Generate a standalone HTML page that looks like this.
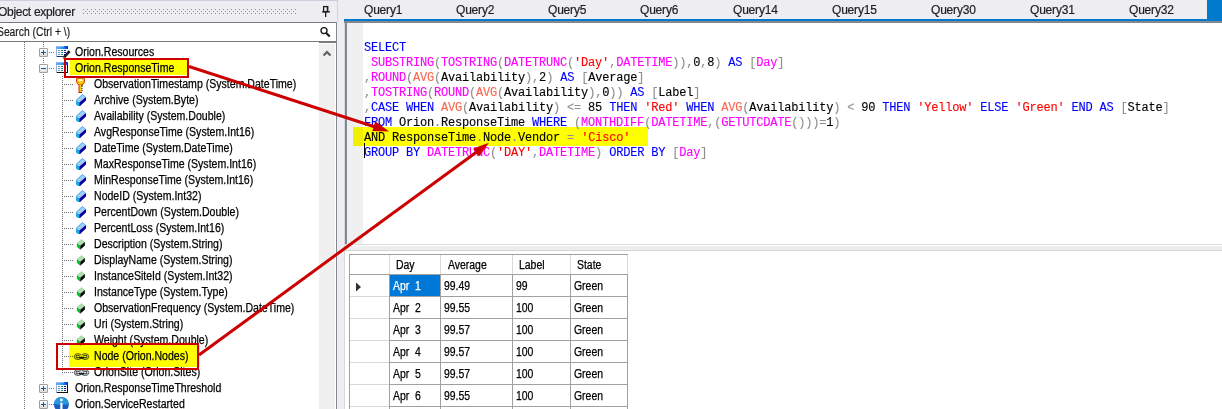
<!DOCTYPE html>
<html><head><meta charset="utf-8">
<style>
*{margin:0;padding:0;box-sizing:border-box}
html,body{width:1222px;height:409px;overflow:hidden;background:#fff;position:relative;font-family:"Liberation Sans",sans-serif}
.a{position:absolute}
.hdr{left:0;top:0;width:337px;height:22px;background:#EEEEF2;border-top:1px solid #CCCEDB}
.hdrtxt{left:-2px;top:5px;font-size:12px;color:#1E1E1E;letter-spacing:-0.3px;white-space:nowrap;-webkit-text-stroke:0.2px #1E1E1E}
.grip{left:83px;top:9px;width:214px;height:5px;background-image:linear-gradient(#8A8A8A,#8A8A8A),linear-gradient(#8A8A8A,#8A8A8A);background-size:1px 1px;background-repeat:no-repeat}
.search{left:-2px;top:22px;width:339px;height:21px;background:#fff;border:1px solid #7A7A7A;border-width:1px 1px 2px 0}
.stxt{left:-3px;top:25px;font-size:12px;color:#1E1E1E;white-space:nowrap;transform:scaleX(0.86);transform-origin:0 0;-webkit-text-stroke:0.2px #1E1E1E}
.tree{left:0;top:42px;width:319px;height:367px;background:#fff;overflow:hidden}
.sb{left:319px;top:44px;width:16px;height:365px;background:#F0F0F0}
.vborder{left:336px;top:22px;width:1px;height:387px;background:#828790}
.split{left:337px;top:0;width:7px;height:409px;background:#EEEEF2}
.tabs{left:344px;top:0;width:878px;height:19px;background:#EEEEF2}
.tab{top:3px;font-size:12px;letter-spacing:-0.2px;color:#1E1E1E;white-space:nowrap;-webkit-text-stroke:0.2px #1E1E1E}
.bluel{left:344px;top:19px;width:878px;height:2px;background:#007ACC}
.edframe{left:344px;top:21px;width:878px;height:2px;background:#828790}
.edl{left:345px;top:21px;width:2px;height:223px;background:#828790}
.margin{left:347px;top:23px;width:16px;height:221px;background:#F0F0F0}
.code{left:364px;top:41px;font-family:"Liberation Mono",monospace;font-size:12px;letter-spacing:-0.2px;line-height:15px;white-space:pre;color:#000;-webkit-text-stroke:0.12px currentColor}
.k{color:#0000FF}.f{color:#FF00FF}.g{color:#909090}.s{color:#FF0000}.ag{color:#F86850}
.tr{font-size:12px;white-space:nowrap;color:#000;-webkit-text-stroke:0.25px #000;line-height:16px;height:16px;transform:scaleX(0.88);transform-origin:0 0}

.dotv{width:1px;background-image:linear-gradient(to bottom,#707070 50%,transparent 50%);background-size:1px 2px}
.doth{height:1px;background-image:linear-gradient(to right,#707070 50%,transparent 50%);background-size:2px 1px}
.pm{width:9px;height:9px;border:1px solid #A0A0A0;border-radius:1px;background:linear-gradient(#FFFFFF,#E0E0E0)}
.pm .ph{position:absolute;left:1px;top:3px;width:5px;height:1px;background:#2050A0}
.pm .pv{position:absolute;left:3px;top:1px;width:1px;height:5px;background:#2050A0}
.gt{font-size:12px;white-space:nowrap;color:#000;-webkit-text-stroke:0.25px currentColor;line-height:13px;transform:scaleX(0.87);transform-origin:0 0}
.hl{background:#FFFF00;mix-blend-mode:multiply}
.rb{border:2px solid #CC0000}
.grid td{border:1px solid #A0A0A0}
</style></head><body>
<!-- left panel -->
<div class="a hdr"></div>
<div class="a hdrtxt">Object explorer</div>
<svg class="a" style="left:83px;top:9px" width="214" height="5"><defs><pattern id="gp" width="4" height="4" patternUnits="userSpaceOnUse"><rect x="0" y="0" width="1" height="1" fill="#8A8A8A"/><rect x="2" y="2" width="1" height="1" fill="#8A8A8A"/></pattern></defs><rect width="214" height="5" fill="url(#gp)"/></svg>
<svg class="a" style="left:321px;top:5px" width="10" height="13" viewBox="0 0 10 13"><rect x="2.6" y="1.6" width="4" height="5" fill="none" stroke="#1E1E1E" stroke-width="1.3"/><rect x="5.8" y="1" width="1.4" height="6" fill="#1E1E1E"/><rect x="1" y="6.2" width="8" height="1.3" fill="#1E1E1E"/><rect x="4" y="7" width="1.3" height="5" fill="#1E1E1E"/></svg><div class="a" style="left:337px;top:0;width:1px;height:22px;background:#D0D2DE;z-index:3"></div>
<div class="a search"></div>
<div class="a stxt">Search (Ctrl + \)</div>
<svg class="a" style="left:319px;top:26px" width="13" height="13" viewBox="0 0 13 13"><circle cx="5" cy="4.6" r="3" fill="none" stroke="#1E1E1E" stroke-width="1.4"/><path d="M7.2 7l3.5 3.6" stroke="#1E1E1E" stroke-width="2.2"/></svg>
<div class="a tree" id="tree"></div>
<div class="a sb"></div>
<svg class="a" style="left:322px;top:49px" width="10" height="9" viewBox="0 0 10 9"><path d="M1.5 6.5L5 3L8.5 6.5" fill="none" stroke="#606060" stroke-width="2.2"/></svg>
<div class="a vborder"></div>
<div class="a split"></div>
<!-- right: tabs -->
<div class="a tabs"></div>
<div class="a tab" style="left:364px">Query1</div>
<div class="a tab" style="left:456px">Query2</div>
<div class="a tab" style="left:548px">Query5</div>
<div class="a tab" style="left:640px">Query6</div>
<div class="a tab" style="left:733px">Query14</div>
<div class="a tab" style="left:832px">Query15</div>
<div class="a tab" style="left:931px">Query30</div>
<div class="a tab" style="left:1030px">Query31</div>
<div class="a tab" style="left:1129px">Query32</div>
<div class="a" style="left:1207px;top:0;width:15px;height:19px;background:#007ACC"></div>
<div class="a bluel"></div>
<div class="a edframe"></div>
<div class="a edl"></div>
<div class="a margin"></div>
<div class="a hl" style="left:353px;top:127px;width:295px;height:19px"></div>
<div class="a code"><span class="k">SELECT</span>
 <span class="f">SUBSTRING</span><span class="g">(</span><span class="f">TOSTRING</span><span class="g">(</span><span class="f">DATETRUNC</span><span class="g">(</span><span class="s">'Day'</span><span class="g">,</span><span class="f">DATETIME</span><span class="g">)),</span>0<span class="g">,</span>8<span class="g">)</span> <span class="k">AS</span> <span class="g">[</span><span class="f">Day</span><span class="g">]</span>
<span class="g">,</span><span class="f">ROUND</span><span class="g">(</span><span class="ag">AVG</span><span class="g">(</span>Availability<span class="g">),</span>2<span class="g">)</span> <span class="k">AS</span> <span class="g">[</span>Average<span class="g">]</span>
<span class="g">,</span><span class="f">TOSTRING</span><span class="g">(</span><span class="f">ROUND</span><span class="g">(</span><span class="ag">AVG</span><span class="g">(</span>Availability<span class="g">),</span>0<span class="g">))</span> <span class="k">AS</span> <span class="g">[</span>Label<span class="g">]</span>
<span class="g">,</span><span class="k">CASE WHEN</span> <span class="ag">AVG</span><span class="g">(</span>Availability<span class="g">) &lt;=</span> 85 <span class="k">THEN</span> <span class="s">'Red'</span> <span class="k">WHEN</span> <span class="ag">AVG</span><span class="g">(</span>Availability<span class="g">) &lt;</span> 90 <span class="k">THEN</span> <span class="s">'Yellow'</span> <span class="k">ELSE</span> <span class="s">'Green'</span> <span class="k">END AS</span> <span class="g">[</span>State<span class="g">]</span>
<span class="k">FROM</span> Orion<span class="g">.</span>ResponseTime <span class="k">WHERE</span> <span class="g">(</span><span class="f">MONTHDIFF</span><span class="g">(</span><span class="f">DATETIME</span><span class="g">,(</span><span class="f">GETUTCDATE</span><span class="g">()))=</span>1<span class="g">)</span>
AND ResponseTime<span class="g">.</span>Node<span class="g">.</span>Vendor <span class="g">=</span> <span class="s">'Cisco'</span>
<span class="k">GROUP BY</span> <span class="f">DATETRUNC</span><span class="g">(</span><span class="s">'DAY'</span><span class="g">,</span><span class="f">DATETIME</span><span class="g">)</span> <span class="k">ORDER BY</span> <span class="g">[</span><span class="f">Day</span><span class="g">]</span></div>
<div class="a" style="left:364px;top:143px;width:1px;height:15px;background:#000"></div>

<!-- splitter -->
<div class="a" style="left:345px;top:244px;width:877px;height:1px;background:#DCDCDC"></div>
<div class="a" style="left:345px;top:246px;width:877px;height:4px;background:#EEEEEE"></div>
<div class="a" style="left:345px;top:250px;width:877px;height:1px;background:#D4D4D4"></div>
<div class="a" style="left:344px;top:23px;width:1px;height:386px;background:#D8D8E4"></div>
<div class="a" style="left:349px;top:254px;width:279px;height:1px;background:#A0A0A0"></div>
<div class="a" style="left:349px;top:254px;width:1px;height:155px;background:#A0A0A0"></div>
<div class="a" style="left:389px;top:255px;width:1px;height:19px;background:#D8D8D8"></div>
<div class="a" style="left:440px;top:255px;width:1px;height:19px;background:#D8D8D8"></div>
<div class="a" style="left:512px;top:255px;width:1px;height:19px;background:#D8D8D8"></div>
<div class="a" style="left:570px;top:255px;width:1px;height:19px;background:#D8D8D8"></div>
<div class="a" style="left:627px;top:255px;width:1px;height:19px;background:#D8D8D8"></div>
<div class="a" style="left:350px;top:274px;width:40px;height:1px;background:#A0A0A0"></div>
<div class="a" style="left:389px;top:274px;width:239px;height:1px;background:#A0A0A0"></div>
<div class="a gt" style="left:396px;top:259px">Day</div>
<div class="a gt" style="left:448px;top:259px">Average</div>
<div class="a gt" style="left:519px;top:259px">Label</div>
<div class="a gt" style="left:577px;top:259px">State</div>
<div class="a" style="left:390px;top:275px;width:50px;height:21px;background:#0078D7"></div>
<svg class="a" style="left:355px;top:282px" width="7" height="10"><path d="M1 0.5L6 5L1 9.5z" fill="#303030"/></svg>
<div class="a" style="left:350px;top:296px;width:39px;height:1px;background:#D8D8D8"></div>
<div class="a" style="left:389px;top:296px;width:239px;height:1px;background:#A0A0A0"></div>
<div class="a gt" style="left:393px;top:280px;color:#fff">Apr &nbsp;1</div>
<div class="a gt" style="left:444px;top:280px">99.49</div>
<div class="a gt" style="left:516px;top:280px">99</div>
<div class="a gt" style="left:574px;top:280px">Green</div>
<div class="a" style="left:350px;top:318px;width:39px;height:1px;background:#D8D8D8"></div>
<div class="a" style="left:389px;top:318px;width:239px;height:1px;background:#A0A0A0"></div>
<div class="a gt" style="left:393px;top:302px;color:#000">Apr &nbsp;2</div>
<div class="a gt" style="left:444px;top:302px">99.55</div>
<div class="a gt" style="left:516px;top:302px">100</div>
<div class="a gt" style="left:574px;top:302px">Green</div>
<div class="a" style="left:350px;top:340px;width:39px;height:1px;background:#D8D8D8"></div>
<div class="a" style="left:389px;top:340px;width:239px;height:1px;background:#A0A0A0"></div>
<div class="a gt" style="left:393px;top:324px;color:#000">Apr &nbsp;3</div>
<div class="a gt" style="left:444px;top:324px">99.57</div>
<div class="a gt" style="left:516px;top:324px">100</div>
<div class="a gt" style="left:574px;top:324px">Green</div>
<div class="a" style="left:350px;top:362px;width:39px;height:1px;background:#D8D8D8"></div>
<div class="a" style="left:389px;top:362px;width:239px;height:1px;background:#A0A0A0"></div>
<div class="a gt" style="left:393px;top:346px;color:#000">Apr &nbsp;4</div>
<div class="a gt" style="left:444px;top:346px">99.57</div>
<div class="a gt" style="left:516px;top:346px">100</div>
<div class="a gt" style="left:574px;top:346px">Green</div>
<div class="a" style="left:350px;top:384px;width:39px;height:1px;background:#D8D8D8"></div>
<div class="a" style="left:389px;top:384px;width:239px;height:1px;background:#A0A0A0"></div>
<div class="a gt" style="left:393px;top:368px;color:#000">Apr &nbsp;5</div>
<div class="a gt" style="left:444px;top:368px">99.57</div>
<div class="a gt" style="left:516px;top:368px">100</div>
<div class="a gt" style="left:574px;top:368px">Green</div>
<div class="a" style="left:350px;top:406px;width:39px;height:1px;background:#D8D8D8"></div>
<div class="a" style="left:389px;top:406px;width:239px;height:1px;background:#A0A0A0"></div>
<div class="a gt" style="left:393px;top:390px;color:#000">Apr &nbsp;6</div>
<div class="a gt" style="left:444px;top:390px">99.55</div>
<div class="a gt" style="left:516px;top:390px">100</div>
<div class="a gt" style="left:574px;top:390px">Green</div>
<div class="a" style="left:350px;top:428px;width:39px;height:1px;background:#D8D8D8"></div>
<div class="a" style="left:389px;top:428px;width:239px;height:1px;background:#A0A0A0"></div>
<div class="a gt" style="left:393px;top:412px;color:#000">Apr &nbsp;7</div>
<div class="a gt" style="left:444px;top:412px">99.55</div>
<div class="a gt" style="left:516px;top:412px">100</div>
<div class="a gt" style="left:574px;top:412px">Green</div>
<div class="a" style="left:389px;top:274px;width:1px;height:135px;background:#A0A0A0"></div>
<div class="a" style="left:440px;top:274px;width:1px;height:135px;background:#A0A0A0"></div>
<div class="a" style="left:512px;top:274px;width:1px;height:135px;background:#A0A0A0"></div>
<div class="a" style="left:570px;top:274px;width:1px;height:135px;background:#A0A0A0"></div>
<div class="a" style="left:627px;top:274px;width:1px;height:135px;background:#A0A0A0"></div>
<div class="a dotv" style="left:24px;top:42px;height:367px"></div>
<div class="a dotv" style="left:43px;top:42px;height:367px"></div>
<div class="a dotv" style="left:62px;top:76px;height:297px"></div>
<div class="a doth" style="left:49px;top:52px;width:6px"></div>
<div class="a pm" style="left:39px;top:48px"><i class="pv"></i><i class="ph"></i></div>
<svg class="a" style="left:55px;top:46px" width="16" height="13" viewBox="0 0 16 13"><defs><linearGradient id="tha" x1="0" x2="1"><stop offset="0" stop-color="#80A8F0"/><stop offset="0.5" stop-color="#28A0F0"/><stop offset="1" stop-color="#0828E0"/></linearGradient></defs><rect x="1" y="0" width="12" height="3" fill="url(#tha)"/><rect x="2" y="0" width="7" height="1" fill="#A8C8F8" opacity="0.7"/><rect x="1" y="3" width="12" height="8" fill="#FAFCFF"/><rect x="1" y="3" width="1" height="8" fill="#98B0E0"/><rect x="3" y="4" width="2" height="1" fill="#8898B0"/><rect x="6" y="4" width="2" height="1" fill="#1890A0"/><rect x="9" y="4" width="2" height="1" fill="#101880"/><rect x="3" y="6" width="2" height="1" fill="#8898B0"/><rect x="6" y="6" width="2" height="1" fill="#1890A0"/><rect x="9" y="6" width="2" height="1" fill="#101880"/><rect x="3" y="8" width="2" height="1" fill="#8898B0"/><rect x="6" y="8" width="2" height="1" fill="#1890A0"/><rect x="9" y="8" width="2" height="1" fill="#101880"/><rect x="2" y="10" width="6" height="1" fill="#203058"/><path d="M8.8 11.6L14.6 5.2" stroke="#101010" stroke-width="2.6"/><path d="M10.2 10.2L13.6 6.4" stroke="#304870" stroke-width="0.8"/><path d="M8 12.6l1.4-1.6" stroke="#D06020" stroke-width="1.4"/></svg>
<div class="a tr" style="left:75px;top:44px">Orion.Resources</div>
<div class="a doth" style="left:49px;top:68px;width:6px"></div>
<div class="a pm" style="left:39px;top:64px"><i class="ph"></i></div>
<svg class="a" style="left:55px;top:62px" width="14" height="12" viewBox="0 0 14 12"><defs><linearGradient id="thb" x1="0" x2="1"><stop offset="0" stop-color="#80A8F0"/><stop offset="0.5" stop-color="#28A0F0"/><stop offset="1" stop-color="#0828E0"/></linearGradient></defs><rect x="1" y="0" width="12" height="3" fill="url(#thb)"/><rect x="2" y="0" width="7" height="1" fill="#A8C8F8" opacity="0.7"/><rect x="1" y="3" width="12" height="8" fill="#FAFCFF"/><rect x="1" y="3" width="1" height="8" fill="#98B0E0"/><rect x="3" y="4" width="2" height="1" fill="#8898B0"/><rect x="6" y="4" width="2" height="1" fill="#1890A0"/><rect x="3" y="6" width="2" height="1" fill="#8898B0"/><rect x="6" y="6" width="2" height="1" fill="#1890A0"/><rect x="3" y="8" width="2" height="1" fill="#8898B0"/><rect x="6" y="8" width="2" height="1" fill="#1890A0"/><rect x="12" y="3" width="1" height="8" fill="#101010"/><rect x="2" y="10" width="11" height="1" fill="#101010"/></svg>
<div class="a tr" style="left:75px;top:60px">Orion.ResponseTime</div>
<div class="a doth" style="left:64px;top:84px;width:9px"></div>
<svg class="a" style="left:75px;top:77px" width="11" height="16" viewBox="0 0 11 16"><path d="M1.5 2.2Q1.5 1 2.8 1H8.2Q9.5 1 9.5 2.2V4.5Q9.5 6.5 7 8H4Q1.5 6.5 1.5 4.5z" fill="#F8C400" stroke="#C03800" stroke-width="1"/><ellipse cx="5.5" cy="3.2" rx="2.3" ry="1.1" fill="#FFF"/><rect x="4" y="7.5" width="3" height="8.5" fill="#F8D000"/><rect x="3.5" y="8" width="1" height="8" fill="#D03000"/><rect x="6.5" y="9" width="1" height="1" fill="#200"/><rect x="6.5" y="11" width="1" height="1" fill="#200"/><rect x="6.5" y="13" width="1" height="1" fill="#200"/><rect x="6.5" y="7.5" width="1" height="1.5" fill="#200"/><rect x="4" y="15" width="3" height="1" fill="#A02000"/></svg>
<div class="a tr" style="left:94px;top:76px">ObservationTimestamp (System.DateTime)</div>
<div class="a doth" style="left:64px;top:100px;width:9px"></div>
<svg class="a" style="left:75px;top:92px" width="12" height="14" viewBox="0 0 12 14"><path d="M1 7.8L7.4 2L11 5L4.2 10.6z" fill="#A8C8F8"/><path d="M4.2 10.6L11 5v3.6L4.2 14.8z" fill="#0000A0"/><path d="M1 7.8L4.2 10.6v4.2L1 12.4z" fill="#20A8E8"/><path d="M1.6 7.9L7.4 2.6L10.4 5.1" fill="none" stroke="#40B8F8" stroke-width="0.9"/></svg>
<div class="a tr" style="left:94px;top:92px">Archive (System.Byte)</div>
<div class="a doth" style="left:64px;top:116px;width:9px"></div>
<svg class="a" style="left:75px;top:108px" width="12" height="14" viewBox="0 0 12 14"><path d="M1 7.8L7.4 2L11 5L4.2 10.6z" fill="#A8C8F8"/><path d="M4.2 10.6L11 5v3.6L4.2 14.8z" fill="#0000A0"/><path d="M1 7.8L4.2 10.6v4.2L1 12.4z" fill="#20A8E8"/><path d="M1.6 7.9L7.4 2.6L10.4 5.1" fill="none" stroke="#40B8F8" stroke-width="0.9"/></svg>
<div class="a tr" style="left:94px;top:108px">Availability (System.Double)</div>
<div class="a doth" style="left:64px;top:132px;width:9px"></div>
<svg class="a" style="left:75px;top:124px" width="12" height="14" viewBox="0 0 12 14"><path d="M1 7.8L7.4 2L11 5L4.2 10.6z" fill="#A8C8F8"/><path d="M4.2 10.6L11 5v3.6L4.2 14.8z" fill="#0000A0"/><path d="M1 7.8L4.2 10.6v4.2L1 12.4z" fill="#20A8E8"/><path d="M1.6 7.9L7.4 2.6L10.4 5.1" fill="none" stroke="#40B8F8" stroke-width="0.9"/></svg>
<div class="a tr" style="left:94px;top:124px">AvgResponseTime (System.Int16)</div>
<div class="a doth" style="left:64px;top:148px;width:9px"></div>
<svg class="a" style="left:75px;top:140px" width="12" height="14" viewBox="0 0 12 14"><path d="M1 7.8L7.4 2L11 5L4.2 10.6z" fill="#A8C8F8"/><path d="M4.2 10.6L11 5v3.6L4.2 14.8z" fill="#0000A0"/><path d="M1 7.8L4.2 10.6v4.2L1 12.4z" fill="#20A8E8"/><path d="M1.6 7.9L7.4 2.6L10.4 5.1" fill="none" stroke="#40B8F8" stroke-width="0.9"/></svg>
<div class="a tr" style="left:94px;top:140px">DateTime (System.DateTime)</div>
<div class="a doth" style="left:64px;top:164px;width:9px"></div>
<svg class="a" style="left:75px;top:156px" width="12" height="14" viewBox="0 0 12 14"><path d="M1 7.8L7.4 2L11 5L4.2 10.6z" fill="#A8C8F8"/><path d="M4.2 10.6L11 5v3.6L4.2 14.8z" fill="#0000A0"/><path d="M1 7.8L4.2 10.6v4.2L1 12.4z" fill="#20A8E8"/><path d="M1.6 7.9L7.4 2.6L10.4 5.1" fill="none" stroke="#40B8F8" stroke-width="0.9"/></svg>
<div class="a tr" style="left:94px;top:156px">MaxResponseTime (System.Int16)</div>
<div class="a doth" style="left:64px;top:180px;width:9px"></div>
<svg class="a" style="left:75px;top:172px" width="12" height="14" viewBox="0 0 12 14"><path d="M1 7.8L7.4 2L11 5L4.2 10.6z" fill="#A8C8F8"/><path d="M4.2 10.6L11 5v3.6L4.2 14.8z" fill="#0000A0"/><path d="M1 7.8L4.2 10.6v4.2L1 12.4z" fill="#20A8E8"/><path d="M1.6 7.9L7.4 2.6L10.4 5.1" fill="none" stroke="#40B8F8" stroke-width="0.9"/></svg>
<div class="a tr" style="left:94px;top:172px">MinResponseTime (System.Int16)</div>
<div class="a doth" style="left:64px;top:196px;width:9px"></div>
<svg class="a" style="left:75px;top:188px" width="12" height="14" viewBox="0 0 12 14"><path d="M1 7.8L7.4 2L11 5L4.2 10.6z" fill="#A8C8F8"/><path d="M4.2 10.6L11 5v3.6L4.2 14.8z" fill="#0000A0"/><path d="M1 7.8L4.2 10.6v4.2L1 12.4z" fill="#20A8E8"/><path d="M1.6 7.9L7.4 2.6L10.4 5.1" fill="none" stroke="#40B8F8" stroke-width="0.9"/></svg>
<div class="a tr" style="left:94px;top:188px">NodeID (System.Int32)</div>
<div class="a doth" style="left:64px;top:212px;width:9px"></div>
<svg class="a" style="left:75px;top:204px" width="12" height="14" viewBox="0 0 12 14"><path d="M1 7.8L7.4 2L11 5L4.2 10.6z" fill="#A8C8F8"/><path d="M4.2 10.6L11 5v3.6L4.2 14.8z" fill="#0000A0"/><path d="M1 7.8L4.2 10.6v4.2L1 12.4z" fill="#20A8E8"/><path d="M1.6 7.9L7.4 2.6L10.4 5.1" fill="none" stroke="#40B8F8" stroke-width="0.9"/></svg>
<div class="a tr" style="left:94px;top:204px">PercentDown (System.Double)</div>
<div class="a doth" style="left:64px;top:228px;width:9px"></div>
<svg class="a" style="left:75px;top:220px" width="12" height="14" viewBox="0 0 12 14"><path d="M1 7.8L7.4 2L11 5L4.2 10.6z" fill="#A8C8F8"/><path d="M4.2 10.6L11 5v3.6L4.2 14.8z" fill="#0000A0"/><path d="M1 7.8L4.2 10.6v4.2L1 12.4z" fill="#20A8E8"/><path d="M1.6 7.9L7.4 2.6L10.4 5.1" fill="none" stroke="#40B8F8" stroke-width="0.9"/></svg>
<div class="a tr" style="left:94px;top:220px">PercentLoss (System.Int16)</div>
<div class="a doth" style="left:64px;top:244px;width:9px"></div>
<svg class="a" style="left:76px;top:237px" width="10" height="14" viewBox="0 0 10 14"><path d="M0.9 6L5.4 1.9L8.9 5L4.2 8.8z" fill="#B0DCB0"/><path d="M4.2 8.8L8.9 5V8.4L4.2 12.7z" fill="#000"/><path d="M0.9 6L4.2 8.8V12.7L0.9 9.8z" fill="#00C020"/></svg>
<div class="a tr" style="left:94px;top:236px">Description (System.String)</div>
<div class="a doth" style="left:64px;top:260px;width:9px"></div>
<svg class="a" style="left:76px;top:253px" width="10" height="14" viewBox="0 0 10 14"><path d="M0.9 6L5.4 1.9L8.9 5L4.2 8.8z" fill="#B0DCB0"/><path d="M4.2 8.8L8.9 5V8.4L4.2 12.7z" fill="#000"/><path d="M0.9 6L4.2 8.8V12.7L0.9 9.8z" fill="#00C020"/></svg>
<div class="a tr" style="left:94px;top:252px">DisplayName (System.String)</div>
<div class="a doth" style="left:64px;top:276px;width:9px"></div>
<svg class="a" style="left:76px;top:269px" width="10" height="14" viewBox="0 0 10 14"><path d="M0.9 6L5.4 1.9L8.9 5L4.2 8.8z" fill="#B0DCB0"/><path d="M4.2 8.8L8.9 5V8.4L4.2 12.7z" fill="#000"/><path d="M0.9 6L4.2 8.8V12.7L0.9 9.8z" fill="#00C020"/></svg>
<div class="a tr" style="left:94px;top:268px">InstanceSiteId (System.Int32)</div>
<div class="a doth" style="left:64px;top:292px;width:9px"></div>
<svg class="a" style="left:76px;top:285px" width="10" height="14" viewBox="0 0 10 14"><path d="M0.9 6L5.4 1.9L8.9 5L4.2 8.8z" fill="#B0DCB0"/><path d="M4.2 8.8L8.9 5V8.4L4.2 12.7z" fill="#000"/><path d="M0.9 6L4.2 8.8V12.7L0.9 9.8z" fill="#00C020"/></svg>
<div class="a tr" style="left:94px;top:284px">InstanceType (System.Type)</div>
<div class="a doth" style="left:64px;top:308px;width:9px"></div>
<svg class="a" style="left:76px;top:301px" width="10" height="14" viewBox="0 0 10 14"><path d="M0.9 6L5.4 1.9L8.9 5L4.2 8.8z" fill="#B0DCB0"/><path d="M4.2 8.8L8.9 5V8.4L4.2 12.7z" fill="#000"/><path d="M0.9 6L4.2 8.8V12.7L0.9 9.8z" fill="#00C020"/></svg>
<div class="a tr" style="left:94px;top:300px">ObservationFrequency (System.DateTime)</div>
<div class="a doth" style="left:64px;top:324px;width:9px"></div>
<svg class="a" style="left:76px;top:317px" width="10" height="14" viewBox="0 0 10 14"><path d="M0.9 6L5.4 1.9L8.9 5L4.2 8.8z" fill="#B0DCB0"/><path d="M4.2 8.8L8.9 5V8.4L4.2 12.7z" fill="#000"/><path d="M0.9 6L4.2 8.8V12.7L0.9 9.8z" fill="#00C020"/></svg>
<div class="a tr" style="left:94px;top:316px">Uri (System.String)</div>
<div class="a doth" style="left:64px;top:340px;width:9px"></div>
<svg class="a" style="left:76px;top:333px" width="10" height="14" viewBox="0 0 10 14"><path d="M0.9 6L5.4 1.9L8.9 5L4.2 8.8z" fill="#B0DCB0"/><path d="M4.2 8.8L8.9 5V8.4L4.2 12.7z" fill="#000"/><path d="M0.9 6L4.2 8.8V12.7L0.9 9.8z" fill="#00C020"/></svg>
<div class="a tr" style="left:94px;top:332px">Weight (System.Double)</div>
<div class="a doth" style="left:64px;top:356px;width:9px"></div>
<svg class="a" style="left:73px;top:352px" width="17" height="10" viewBox="0 0 17 10"><ellipse cx="4.9" cy="4.6" rx="3.7" ry="2.9" fill="#F0F000" stroke="#505050" stroke-width="1"/><ellipse cx="12.1" cy="4.6" rx="3.7" ry="2.9" fill="#F0F000" stroke="#505050" stroke-width="1"/><rect x="3.2" y="3.6" width="3.6" height="2" fill="none" stroke="#404040" stroke-width="0.9"/><rect x="10.2" y="3.6" width="3.6" height="2" fill="none" stroke="#404040" stroke-width="0.9"/><rect x="6.5" y="3.3" width="4" height="1" fill="#F0F000"/><rect x="6.3" y="5.2" width="4.4" height="1.4" fill="#000"/><rect x="4" y="6.4" width="1.2" height="1" fill="#40A040"/><rect x="11.5" y="6.4" width="1.2" height="1" fill="#40A040"/></svg>
<div class="a tr" style="left:94px;top:348px">Node (Orion.Nodes)</div>
<div class="a doth" style="left:64px;top:372px;width:9px"></div>
<svg class="a" style="left:73px;top:368px" width="17" height="10" viewBox="0 0 17 10"><ellipse cx="4.9" cy="4.6" rx="3.7" ry="2.9" fill="#E8EEF8" stroke="#505050" stroke-width="1"/><ellipse cx="12.1" cy="4.6" rx="3.7" ry="2.9" fill="#E8EEF8" stroke="#505050" stroke-width="1"/><rect x="3.2" y="3.6" width="3.6" height="2" fill="none" stroke="#404040" stroke-width="0.9"/><rect x="10.2" y="3.6" width="3.6" height="2" fill="none" stroke="#404040" stroke-width="0.9"/><rect x="6.5" y="3.3" width="4" height="1" fill="#E8EEF8"/><rect x="6.3" y="5.2" width="4.4" height="1.4" fill="#000"/><rect x="4" y="6.4" width="1.2" height="1" fill="#20A0D0"/><rect x="11.5" y="6.4" width="1.2" height="1" fill="#20A0D0"/></svg>
<div class="a tr" style="left:94px;top:364px">OrionSite (Orion.Sites)</div>
<div class="a doth" style="left:49px;top:388px;width:6px"></div>
<div class="a pm" style="left:39px;top:384px"><i class="pv"></i><i class="ph"></i></div>
<svg class="a" style="left:55px;top:382px" width="14" height="12" viewBox="0 0 14 12"><defs><linearGradient id="thc" x1="0" x2="1"><stop offset="0" stop-color="#80A8F0"/><stop offset="0.5" stop-color="#28A0F0"/><stop offset="1" stop-color="#0828E0"/></linearGradient></defs><rect x="1" y="0" width="12" height="3" fill="url(#thc)"/><rect x="2" y="0" width="7" height="1" fill="#A8C8F8" opacity="0.7"/><rect x="1" y="3" width="12" height="8" fill="#FAFCFF"/><rect x="1" y="3" width="1" height="8" fill="#98B0E0"/><rect x="3" y="4" width="2" height="1" fill="#8898B0"/><rect x="6" y="4" width="2" height="1" fill="#1890A0"/><rect x="9" y="4" width="2" height="1" fill="#101880"/><rect x="3" y="6" width="2" height="1" fill="#8898B0"/><rect x="6" y="6" width="2" height="1" fill="#1890A0"/><rect x="9" y="6" width="2" height="1" fill="#101880"/><rect x="3" y="8" width="2" height="1" fill="#8898B0"/><rect x="6" y="8" width="2" height="1" fill="#1890A0"/><rect x="9" y="8" width="2" height="1" fill="#101880"/><rect x="12" y="3" width="1" height="8" fill="#101010"/><rect x="2" y="10" width="11" height="1" fill="#101010"/></svg>
<div class="a tr" style="left:75px;top:380px">Orion.ResponseTimeThreshold</div>
<div class="a doth" style="left:49px;top:404px;width:6px"></div>
<div class="a pm" style="left:39px;top:400px"><i class="pv"></i><i class="ph"></i></div>
<svg class="a" style="left:53px;top:396px" width="17" height="17" viewBox="0 0 17 17"><circle cx="8.4" cy="8.4" r="7.5" fill="#1C5CC0"/><path d="M0.9 8.4A7.5 7.5 0 0 1 15.9 8.4z" fill="#2898DC"/><circle cx="8.4" cy="4" r="1.4" fill="#fff"/><path d="M8.4 6.8v8" stroke="#fff" stroke-width="2.2"/></svg>
<div class="a tr" style="left:75px;top:396px">Orion.ServiceRestarted</div>

<div class="a hl" style="left:70px;top:60px;width:117px;height:15px"></div>
<div class="a hl" style="left:69px;top:345px;width:131px;height:22px"></div>
<div class="a rb" style="left:64px;top:58px;width:125px;height:20px"></div>
<div class="a rb" style="left:56px;top:343px;width:143px;height:27px"></div>
<svg class="a" style="left:0;top:0" width="1222" height="409">
<line x1="189" y1="66.5" x2="376" y2="127.3" stroke="#CC0000" stroke-width="3"/>
<path d="M389 131.4L375.3 121.3L372.3 130.9z" fill="#CC0000"/>
<line x1="199" y1="355" x2="478" y2="151" stroke="#CC0000" stroke-width="3"/>
<path d="M489 142.7L479 156.4L473.1 148.4z" fill="#CC0000"/>
</svg>

</body></html>
